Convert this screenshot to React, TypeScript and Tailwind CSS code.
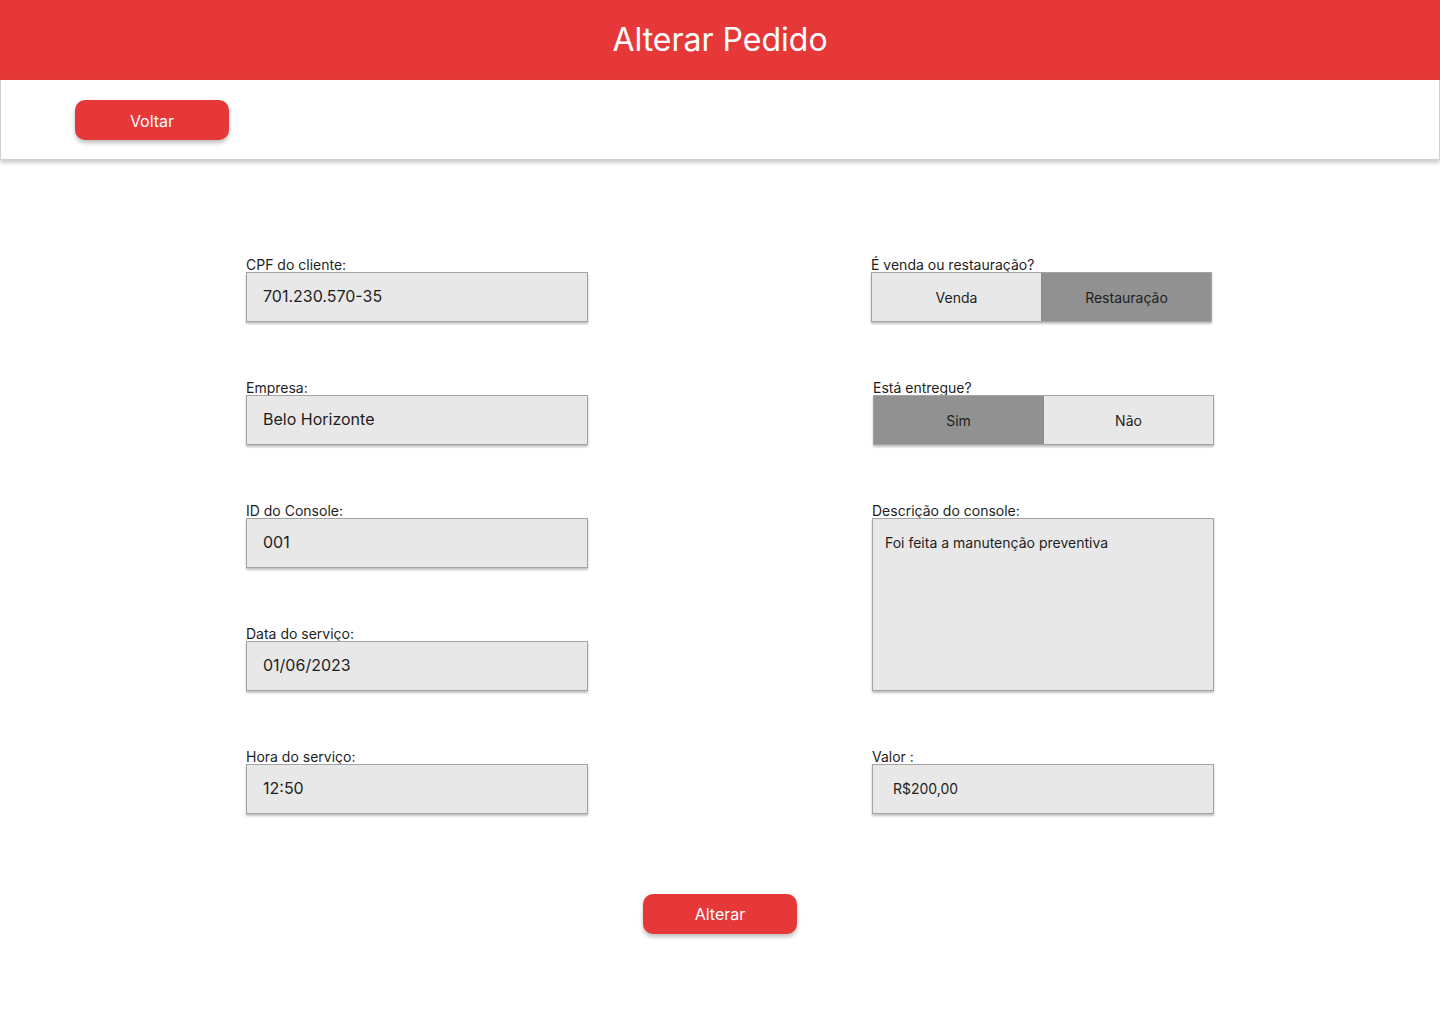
const font = { fontFamily: "Inter, 'Noto Sans', sans-serif" };

function Field({ label, value }: { label: string; value: string }) {
  return (
    <div className="flex flex-col">
      <label className="h-4 pt-px text-[14px] leading-4 text-[#1e1e1e]">{label}</label>
      <div className="flex h-[50px] w-[342px] items-center border border-[#a3a3a3] bg-[#e8e8e8] pb-[2px] pl-[16px] text-[16px] text-[#1e1e1e] shadow-[0_2px_2px_rgba(0,0,0,0.25)]">
        {value}
      </div>
    </div>
  );
}

function Toggle({
  label,
  options,
  active,
  shift,
}: {
  label: string;
  options: [string, string];
  active: number;
  shift: string;
}) {
  return (
    <div className={`flex flex-col ${shift}`}>
      <label className="h-4 pt-px text-[14px] leading-4 text-[#1e1e1e]">{label}</label>
      <div className="flex h-[50px] w-[341px] border border-[#a3a3a3] shadow-[0_2px_2px_rgba(0,0,0,0.25)]">
        {options.map((opt, i) => (
          <button
            key={opt}
            className={
              "flex flex-1 items-center justify-center text-[14px] text-[#1e1e1e] " +
              (i === active ? "bg-[#919191] " : "bg-[#e8e8e8] ") +
              (i === 0 ? "border-r border-[#8a8a8a]" : "")
            }
          >
            {opt}
          </button>
        ))}
      </div>
    </div>
  );
}

export default function App() {
  return (
    <div className="min-h-[1024px] w-full bg-white" style={font}>
      {/* Header */}
      <header className="flex h-20 items-center justify-center bg-[#e63839]">
        <h1 className="text-[32px] text-white">Alterar Pedido</h1>
      </header>

      {/* Nav bar */}
      <div className="flex h-20 items-center border-x border-b border-[#cfcfcf] pl-[74px] shadow-[0_3px_4px_rgba(0,0,0,0.2)]">
        <button className="h-10 w-[154px] rounded-[10px] bg-[#e63839] pt-[2px] text-[16px] text-white shadow-[0_3px_4px_rgba(0,0,0,0.25)]">
          Voltar
        </button>
      </div>

      {/* Form */}
      <div className="flex pl-[246px] pt-24">
        <div className="flex flex-col gap-[57px]">
          <Field label="CPF do cliente:" value="701.230.570-35" />
          <Field label="Empresa:" value="Belo Horizonte" />
          <Field label="ID do Console:" value="001" />
          <Field label="Data do serviço:" value="01/06/2023" />
          <Field label="Hora do serviço:" value="12:50" />
        </div>

        <div className="ml-[283px] flex flex-col gap-[57px]">
          <Toggle label="É venda ou restauração?" options={["Venda", "Restauração"]} active={1} shift="" />
          <Toggle label="Está entregue?" options={["Sim", "Não"]} active={0} shift="ml-[2px]" />

          <div className="ml-px flex flex-col">
            <label className="h-4 pt-px text-[14px] leading-4 text-[#1e1e1e]">Descrição do console:</label>
            <div className="h-[173px] w-[342px] border border-[#a3a3a3] bg-[#e8e8e8] px-3 pt-[13px] text-[14px] text-[#1e1e1e] shadow-[0_2px_2px_rgba(0,0,0,0.25)]">
              Foi feita a manutenção preventiva
            </div>
          </div>

          <div className="ml-px flex flex-col">
            <label className="h-4 pt-px text-[14px] leading-4 text-[#1e1e1e]">Valor :</label>
            <div className="flex h-[50px] w-[342px] items-center border border-[#a3a3a3] bg-[#e8e8e8] pb-px pl-5 text-[14px] text-[#1e1e1e] shadow-[0_2px_2px_rgba(0,0,0,0.25)]">
              R$200,00
            </div>
          </div>
        </div>
      </div>

      <div className="flex justify-center pt-20">
        <button className="h-10 w-[154px] rounded-[10px] bg-[#e63839] text-[16px] text-white shadow-[0_3px_4px_rgba(0,0,0,0.25)]">
          Alterar
        </button>
      </div>
    </div>
  );
}
